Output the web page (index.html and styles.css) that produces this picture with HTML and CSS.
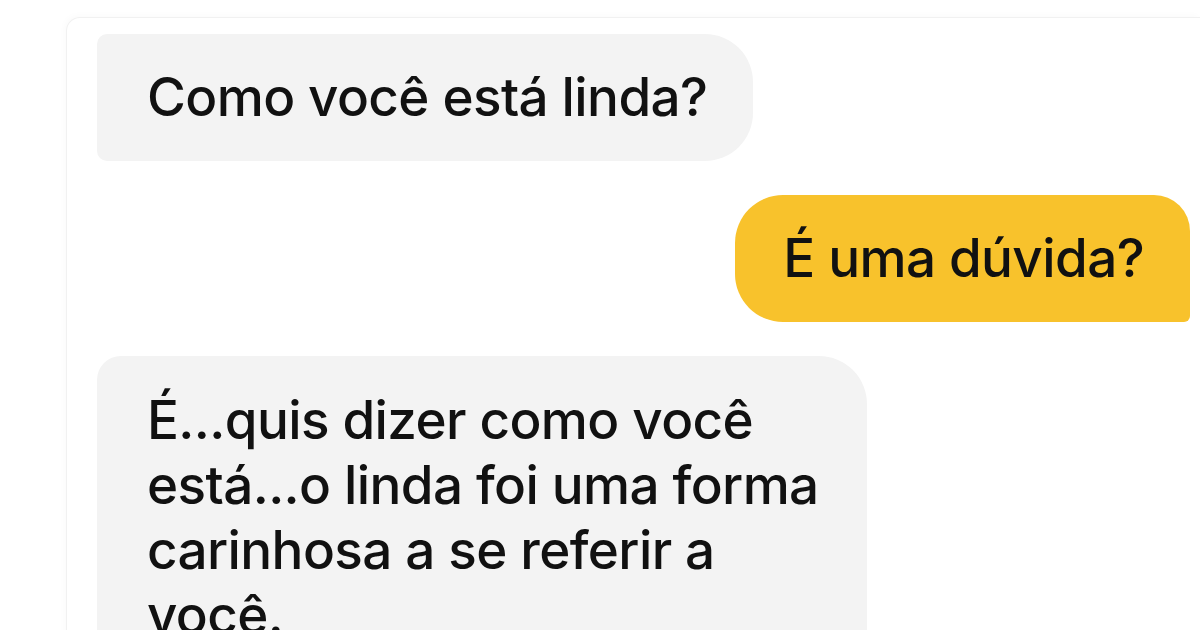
FILE: index.html
```html
<!DOCTYPE html>
<html lang="pt">
<head>
  <meta charset="UTF-8" />
  <title>Conversa</title>
  <link rel="stylesheet" href="styles.css">
</head>
<body>

  <div class="chat-card">
    <div class="msg-row">
      <div class="bubble bubble-in first">Como você está linda?</div>
    </div>

    <div class="msg-row mine">
      <div class="bubble bubble-out">É uma dúvida?</div>
    </div>

    <div class="msg-row">
      <div class="bubble bubble-in long">É...quis dizer como você está...o linda foi uma forma carinhosa a se referir a você.</div>
    </div>
  </div>

</body>
</html>
```

FILE: styles.css
```css
body {
  margin: 0;
  background: #fff;
  font-family: Inter, "Open Sans", sans-serif;
  color: #111;
  overflow: hidden;
  height: 630px;
}

.chat-card {
  margin: 17px 0 0 66px;
  padding: 16px 10px 0 30px;
  border: 1px solid #f1f1f1;
  border-right: none;
  border-radius: 14px 0 0 0;
  box-shadow: -2px -2px 6px rgba(0,0,0,0.02);
  display: flex;
  flex-direction: column;
  gap: 34px;
}

.msg-row {
  display: flex;
}

.msg-row.mine {
  justify-content: flex-end;
}

.bubble {
  font-size: 53px;
  font-weight: 500;
  line-height: 65px;
  letter-spacing: -0.6px;
  padding: 31px 50px;
}

.bubble-in {
  background: #f3f3f3;
  border-radius: 10px 48px 48px 10px;
}

.bubble.first {
  padding-right: 46px;
}

.bubble-out {
  background: #f8c22c;
  padding: 31px 46px 31px 48px;
  border-radius: 48px 36px 6px 48px;
}

.bubble.long {
  width: 700px;
  padding: 32px 20px 60px 50px;
  border-radius: 24px 48px 0 0;
}
```
